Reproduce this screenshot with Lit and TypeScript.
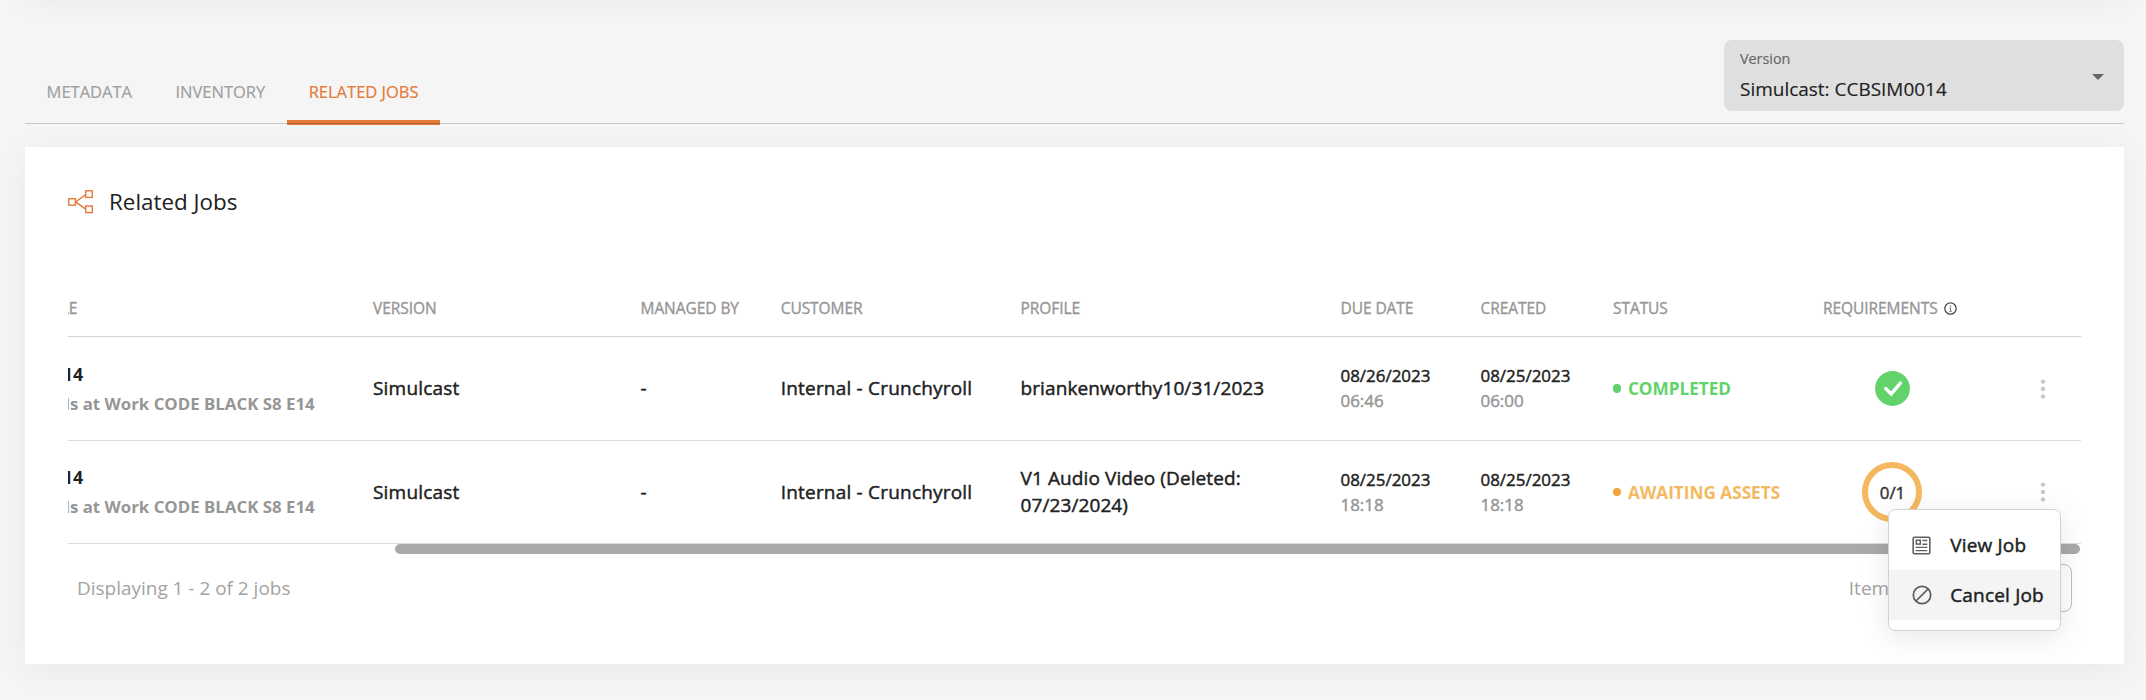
import { LitElement, html, css, svg } from "lit";
import { customElement, state } from "lit/decorators.js";
import { classMap } from "lit/directives/class-map.js";

interface Job {
  title: string;
  subtitle: string;
  version: string;
  managedBy: string;
  customer: string;
  profile: string;
  due: [string, string];
  created: [string, string];
  status: string;
  tone: "done" | "waiting";
  progress: string;
}

const JOBS: Job[] = [
  {
    title: "Ep 14",
    subtitle: "Cells at Work CODE BLACK S8 E14",
    version: "Simulcast",
    managedBy: "-",
    customer: "Internal - Crunchyroll",
    profile: "briankenworthy10/31/2023",
    due: ["08/26/2023", "06:46"],
    created: ["08/25/2023", "06:00"],
    status: "COMPLETED",
    tone: "done",
    progress: "",
  },
  {
    title: "Ep 14",
    subtitle: "Cells at Work CODE BLACK S8 E14",
    version: "Simulcast",
    managedBy: "-",
    customer: "Internal - Crunchyroll",
    profile: "V1 Audio Video (Deleted: 07/23/2024)",
    due: ["08/25/2023", "18:18"],
    created: ["08/25/2023", "18:18"],
    status: "AWAITING ASSETS",
    tone: "waiting",
    progress: "0/1",
  },
];

const networkIcon = svg`<svg width="26" height="24" viewBox="0 0 26 24" fill="none" stroke="#e47b38" stroke-width="1.4">
  <rect x="0.8" y="8.7" width="6.6" height="6.4"/>
  <rect x="17.7" y="0.8" width="6.6" height="6.6"/>
  <rect x="17.7" y="16" width="6.6" height="6.6"/>
  <path d="M17.7 4.6 L7.6 11.9 L17.7 19.1"/>
</svg>`;

const infoIcon = svg`<svg width="13" height="13" viewBox="0 0 13 13" fill="none" stroke="#4c4c4c">
  <circle cx="6.5" cy="6.5" r="5.7" stroke-width="1.3"/>
  <path d="M5.5 5.8 H6.6 V9.2 M5.3 9.3 H7.8" stroke="#777" stroke-width="1"/>
  <circle cx="6.5" cy="3.9" r="0.75" fill="#777" stroke="none"/>
</svg>`;

const checkIcon = svg`<svg width="35" height="35" viewBox="0 0 35 35" fill="none">
  <circle cx="17.5" cy="17.5" r="17.4" fill="#62d36b"/>
  <path d="M10.7 17.5 L16.2 22.9 L25.4 12.1" stroke="#fff" stroke-width="3.4" stroke-linecap="round" stroke-linejoin="miter"/>
</svg>`;

const dotsIcon = svg`<svg width="6" height="20" viewBox="0 0 6 20" fill="#c8c8c8">
  <circle cx="3" cy="2.6" r="2.2"/><circle cx="3" cy="10" r="2.2"/><circle cx="3" cy="17.4" r="2.2"/>
</svg>`;

const newsIcon = svg`<svg width="19" height="19" viewBox="0 0 19 19" fill="none" stroke="#606060" stroke-width="1.6">
  <rect x="1.2" y="1.2" width="16.6" height="16.6" rx="1.2"/>
  <rect x="4.3" y="4.2" width="4" height="3.9" stroke-width="1.5"/>
  <path d="M10.4 4.5 H15.3 M10.4 8.2 H15.3 M3.6 11.4 H15.3 M3.6 14.6 H15.3" stroke-width="1.4"/>
</svg>`;

const cancelIcon = svg`<svg width="20" height="20" viewBox="0 0 20 20" fill="none" stroke="#5a5a5a" stroke-width="1.7">
  <circle cx="10" cy="10" r="8.7"/><path d="M4 16 L16 4"/>
</svg>`;

@customElement("app-root")
export class AppRoot extends LitElement {
  @state() private tab = "RELATED JOBS";

  static styles = css`
    :host {
      display: block;
      position: relative;
      height: 700px;
      overflow: hidden;
      background: #f5f5f5;
      font-family: "Open Sans", sans-serif;
      color: #212121;
    }
    * { box-sizing: border-box; }
    svg { display: block; flex: none; }
    .page { padding: 0 22px 0 25px; }
    .previous {
      height: 40px;
      margin-top: -46px;
      background: #fff;
      box-shadow: 0 6px 30px rgba(0, 0, 0, 0.05);
    }
    .bar {
      position: relative;
      display: flex;
      justify-content: space-between;
      height: 131px;
      margin-bottom: 22px;
      padding-top: 46px;
    }
    .bar::after {
      content: "";
      position: absolute;
      left: 0;
      right: 0;
      bottom: 1px;
      height: 1px;
      background: rgba(0, 0, 0, 0.18);
    }
    .tabs { display: flex; }
    .tab {
      display: flex;
      align-items: center;
      height: 85px;
      padding: 23px 21.8px 0 21.6px;
      border-bottom: 5px solid transparent;
      font-size: 16.5px;
      color: #a0a0a0;
      -webkit-text-stroke: 0.2px currentColor;
      white-space: nowrap;
    }
    .tab.on { color: #e47b38; border-bottom-color: #e47b38; }
    .select {
      display: flex;
      align-items: center;
      justify-content: space-between;
      width: 400px;
      height: 71px;
      padding: 0 20px 0 16px;
      border-radius: 8px;
      background: #dfdfdf;
    }
    .select-text {
      display: flex;
      flex-direction: column;
      padding-bottom: 3px;
      -webkit-text-stroke: 0.15px currentColor;
    }
    .select-label { font-size: 14.34px; line-height: 30px; color: #666; }
    .select-value { font-size: 18.98px; line-height: 30px; }
    .caret {
      border: 6px solid transparent;
      border-top-color: #666;
      border-bottom: 0;
      margin-top: 2px;
    }
    .card {
      position: relative;
      height: 517px;
      padding: 0 43px;
      background: #fff;
      box-shadow: 0 6px 30px rgba(0, 0, 0, 0.05);
    }
    .heading {
      display: flex;
      align-items: center;
      gap: 15px;
      height: 109px;
      font-size: 22.4px;
    }
    .scroller {
      display: flex;
      justify-content: flex-end;
      overflow: hidden;
      margin-top: 25px;
    }
    .table { flex: none; width: 2043px; }
    .row {
      display: grid;
      grid-template-columns: 335px 267.5px 140.2px 239.8px 320px 140px 132.5px 210px 139px 1fr;
      align-items: center;
      height: 104px;
      border-bottom: 1px solid #dedede;
      font-size: 19px;
      letter-spacing: 0.2px;
      line-height: 27px;
      -webkit-text-stroke: 0.45px currentColor;
    }
    .row:last-child { height: 103px; }
    .row.head {
      height: 56px;
      border-bottom-color: #d3d3d3;
      font-size: 15.5px;
      letter-spacing: -0.06px;
      color: #969696;
      -webkit-text-stroke-width: 0.35px;
    }
    .title-head { padding-left: 1.6px; }
    .stack { display: flex; flex-direction: column; white-space: nowrap; letter-spacing: 0; }
    .title-cell { -webkit-text-stroke-width: 0; padding-left: 1px; }
    .name { margin-left: -2px; font-size: 17.8px; font-weight: 700; line-height: 30px; }
    .sub { font-size: 16.84px; font-weight: 700; line-height: 30px; color: #969696; }
    .date { font-size: 16.95px; line-height: 25px; }
    .time { font-size: 16.95px; line-height: 26px; color: #969696; }
    .profile { width: 250px; letter-spacing: 0.1px; }
    .status {
      display: flex;
      align-items: center;
      gap: 6.5px;
      font-size: 17.18px;
      font-weight: 700;
      letter-spacing: 0;
      -webkit-text-stroke-width: 0;
    }
    .dot { width: 8.4px; height: 8.4px; border-radius: 50%; }
    .done { color: #62d36b; }
    .done .dot { background: #62d36b; }
    .waiting { color: #f4b960; }
    .waiting .dot { background: #f4a23a; }
    .req-head { display: flex; align-items: center; gap: 6.5px; }
    .req { display: flex; justify-content: center; }
    .ring {
      display: grid;
      place-items: center;
      width: 60px;
      height: 60px;
      border: 6px solid #f4b960;
      border-radius: 50%;
      font-size: 16.9px;
      letter-spacing: 0;
      color: #333;
    }
    .actions { padding-left: 77.7px; }
    .scrollbar { display: flex; justify-content: flex-end; height: 10px; padding-right: 1px; }
    .thumb { width: 1685px; border-radius: 5px; background: #a9a9a9; }
    .footer {
      display: flex;
      justify-content: space-between;
      align-items: center;
      height: 68px;
      padding: 0 9px;
      font-size: 18.97px;
      color: #a3a3a3;
    }
    .pager { display: flex; align-items: center; gap: 17px; }
    .size {
      width: 74px;
      height: 48px;
      border: 1px solid #bdbdbd;
      border-radius: 8px;
    }
    .menu {
      position: absolute;
      left: 1863px;
      top: 362px;
      width: 173px;
      height: 122px;
      padding: 10px 0;
      border: 1px solid #d2d2d2;
      border-radius: 7px;
      background: #fff;
      box-shadow: 0 6px 30px rgba(0, 0, 0, 0.1);
    }
    .item {
      display: flex;
      align-items: center;
      height: 50px;
      padding-left: 22.5px;
      font-size: 19px;
      letter-spacing: 0.18px;
      -webkit-text-stroke: 0.45px currentColor;
      white-space: nowrap;
    }
    .item.hover { background: #f4f4f4; }
    .glyph { display: flex; width: 38.7px; }
  `;

  private renderJob(job: Job) {
    return html`<div class="row">
      <div class="stack title-cell"><span class="name">${job.title}</span><span class="sub">${job.subtitle}</span></div>
      <div>${job.version}</div>
      <div>${job.managedBy}</div>
      <div>${job.customer}</div>
      <div class="profile">${job.profile}</div>
      <div class="stack"><span class="date">${job.due[0]}</span><span class="time">${job.due[1]}</span></div>
      <div class="stack"><span class="date">${job.created[0]}</span><span class="time">${job.created[1]}</span></div>
      <div class="status ${job.tone}"><span class="dot"></span>${job.status}</div>
      <div class="req">${job.tone === "done" ? checkIcon : html`<div class="ring">${job.progress}</div>`}</div>
      <div class="actions">${dotsIcon}</div>
    </div>`;
  }

  render() {
    return html`<div class="page">
      <div class="previous"></div>
      <header class="bar">
        <nav class="tabs">
          ${["METADATA", "INVENTORY", "RELATED JOBS"].map(
            (t) => html`<div class=${classMap({ tab: true, on: t === this.tab })} @click=${() => (this.tab = t)}>${t}</div>`
          )}
        </nav>
        <div class="select">
          <div class="select-text">
            <span class="select-label">Version</span>
            <span class="select-value">Simulcast: CCBSIM0014</span>
          </div>
          <span class="caret"></span>
        </div>
      </header>
      <section class="card">
        <div class="heading">${networkIcon}<span>Related Jobs</span></div>
        <div class="scroller">
          <div class="table">
            <div class="row head">
              <div class="title-head">TITLE</div><div>VERSION</div><div>MANAGED BY</div><div>CUSTOMER</div><div>PROFILE</div>
              <div>DUE DATE</div><div>CREATED</div><div>STATUS</div>
              <div class="req-head">REQUIREMENTS ${infoIcon}</div>
            </div>
            ${JOBS.map((j) => this.renderJob(j))}
          </div>
        </div>
        <div class="scrollbar"><div class="thumb"></div></div>
        <div class="footer">
          <span>Displaying 1 - 2 of 2 jobs</span>
          <div class="pager"><span>Items per page</span><span class="size"></span></div>
        </div>
        <div class="menu">
          <div class="item"><span class="glyph">${newsIcon}</span>View Job</div>
          <div class="item hover"><span class="glyph">${cancelIcon}</span>Cancel Job</div>
        </div>
      </section>
    </div>`;
  }
}
